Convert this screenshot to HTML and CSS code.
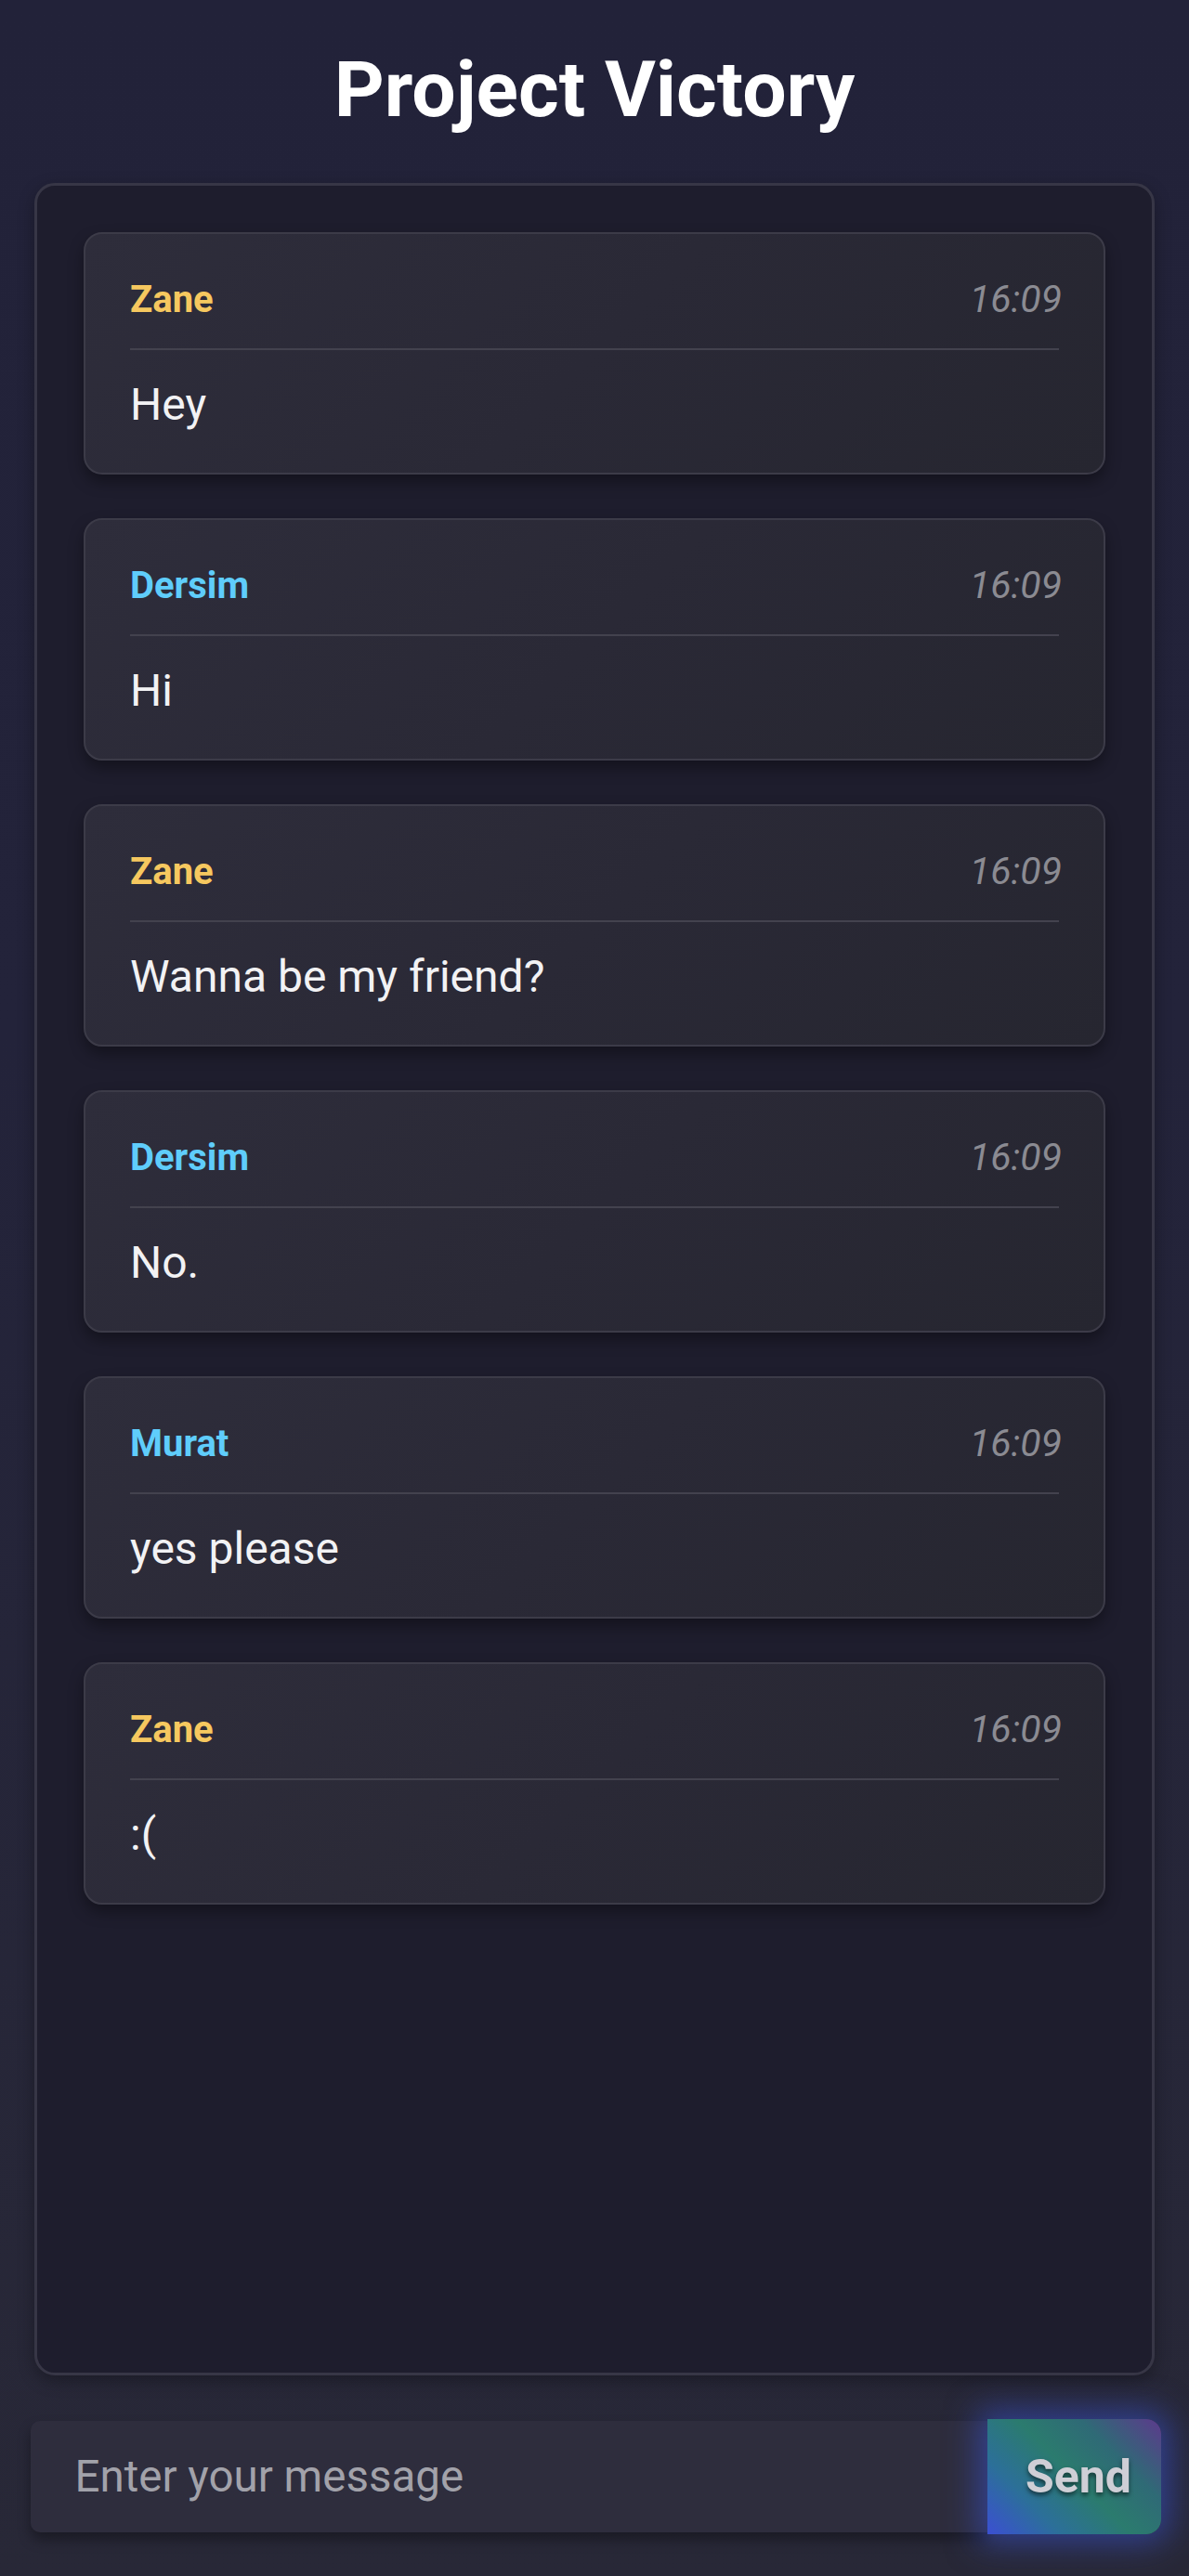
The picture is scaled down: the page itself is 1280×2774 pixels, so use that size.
FILE: index.html
```html
<!DOCTYPE html>
<html lang="en">
<head>
<meta charset="utf-8">
<title>Project Victory</title>
<link rel="stylesheet" href="styles.css">
</head>
<body>
<div class="page">
  <h1 class="title">Project Victory</h1>
  <div class="chat">
    <div class="msg">
      <div class="msg-head"><span class="name zane">Zane</span><span class="time">16:09</span></div>
      <div class="msg-text">Hey</div>
    </div>
    <div class="msg">
      <div class="msg-head"><span class="name blue">Dersim</span><span class="time">16:09</span></div>
      <div class="msg-text">Hi</div>
    </div>
    <div class="msg">
      <div class="msg-head"><span class="name zane">Zane</span><span class="time">16:09</span></div>
      <div class="msg-text">Wanna be my friend?</div>
    </div>
    <div class="msg">
      <div class="msg-head"><span class="name blue">Dersim</span><span class="time">16:09</span></div>
      <div class="msg-text">No.</div>
    </div>
    <div class="msg">
      <div class="msg-head"><span class="name blue">Murat</span><span class="time">16:09</span></div>
      <div class="msg-text">yes please</div>
    </div>
    <div class="msg">
      <div class="msg-head"><span class="name zane">Zane</span><span class="time">16:09</span></div>
      <div class="msg-text">:(</div>
    </div>
  </div>
  <form class="composer">
    <input class="composer-input" type="text" placeholder="Enter your message">
    <button class="send" type="button">Send</button>
  </form>
</div>
</body>
</html>
```

FILE: styles.css
```css
html, body {
  margin: 0;
  padding: 0;
}
body {
  background: linear-gradient(180deg, #222239 0%, #23233a 40%, #282837 100%);
  font-family: Roboto, "Liberation Sans", Arial, sans-serif;
  color: #f0f0f2;
  min-height: 2774px;
}
.page {
  width: 1280px;
  height: 2774px;
  box-sizing: border-box;
  padding-top: 47px;
  display: flex;
  flex-direction: column;
  align-items: center;
}
.title {
  margin: 0;
  font-size: 84px;
  line-height: 1.2;
  font-weight: 700;
  color: #ffffff;
  text-align: center;
}
.chat {
  margin-top: 49px;
  width: 1206px;
  height: 2361px;
  box-sizing: border-box;
  border: 3px solid #373646;
  border-radius: 22px;
  background: #1e1d2d;
  padding: 50px;
  display: flex;
  flex-direction: column;
  gap: 47px;
  box-shadow: 0 6px 18px rgba(0,0,0,0.3);
}
.msg {
  border: 2px solid #3c3b48;
  border-radius: 20px;
  background: linear-gradient(135deg, #2e2d3b 0%, #2a2936 50%, #262630 100%);
  padding: 46px 48px 40px;
  box-shadow: 0 8px 16px rgba(0,0,0,0.35);
}
.msg-head {
  display: flex;
  justify-content: space-between;
  align-items: baseline;
  line-height: 48px;
  padding-bottom: 28px;
  border-bottom: 2px solid #43424e;
}
.name {
  font-size: 40px;
  font-weight: 700;
}
.zane { color: #f6c85f; }
.blue { color: #5fcdfb; }
.time {
  font-size: 41px;
  font-style: italic;
  color: #8b8b92;
  margin-right: -3px;
}
.msg-text {
  margin-top: 26px;
  font-size: 48px;
  line-height: 66px;
  color: #f2f2f4;
}
.composer {
  margin: 47px 0 0;
  width: 1217px;
  margin-left: 2px;
  display: flex;
  align-items: center;
}
.composer-input {
  flex: 1;
  height: 120px;
  box-sizing: border-box;
  border: none;
  outline: none;
  border-radius: 10px 0 0 10px;
  background: #2e2d3d;
  padding: 0 0 0 48px;
  font-family: Roboto, "Liberation Sans", Arial, sans-serif;
  font-size: 47.5px;
  color: #e0e0e4;
  box-shadow: 0 8px 14px rgba(0,0,0,0.35);
}
.composer-input::placeholder {
  color: #a2a2aa;
}
.send {
  position: relative;
  width: 187px;
  height: 124px;
  border: none;
  border-radius: 0 16px 16px 0;
  background: linear-gradient(45deg, #3b4fd2 0%, #2c6f9a 25%, #2b7b6e 50%, #2f6a76 72%, #5c3a8c 100%);
  box-shadow: 0 0 34px 10px rgba(58, 88, 230, 0.5);
  font-family: Roboto, "Liberation Sans", Arial, sans-serif;
  font-size: 50px;
  font-weight: 700;
  color: #cfcfd6;
  text-shadow: 0 3px 5px rgba(0,0,0,0.55);
  padding: 0 0 0 10px;
  cursor: pointer;
}
```
